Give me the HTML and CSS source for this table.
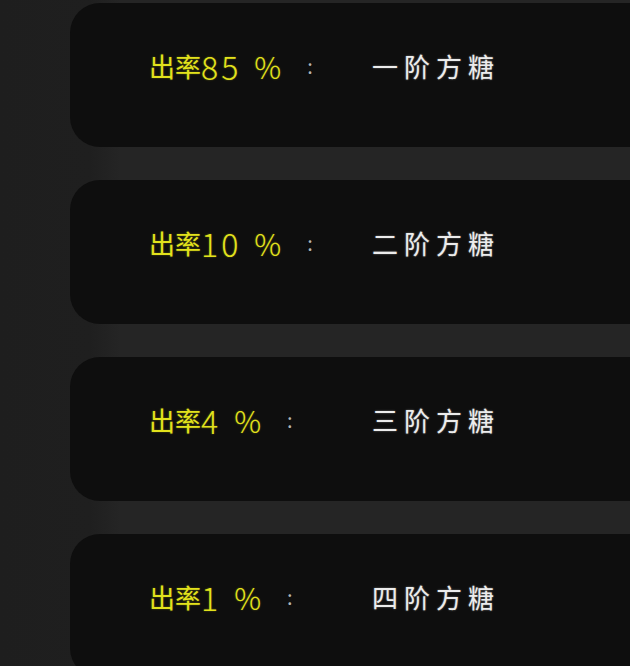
FILE: index.html
```html
<!DOCTYPE html>
<html lang="zh">
<head>
<meta charset="utf-8">
<link rel="stylesheet" href="styles.css">
</head>
<body>
<div class="list">
  <div class="card"><div class="label"><span class="rate">出率<span class="num">85</span><span class="pct">%</span></span><span class="colon">:</span></div><span class="name">一阶方糖</span></div>
  <div class="card"><div class="label"><span class="rate">出率<span class="num">10</span><span class="pct">%</span></span><span class="colon">:</span></div><span class="name">二阶方糖</span></div>
  <div class="card"><div class="label"><span class="rate">出率<span class="num">4</span><span class="pct">%</span></span><span class="colon">:</span></div><span class="name">三阶方糖</span></div>
  <div class="card"><div class="label"><span class="rate">出率<span class="num">1</span><span class="pct">%</span></span><span class="colon">:</span></div><span class="name">四阶方糖</span></div>
</div>
</body>
</html>
```
FILE: styles.css
```css
html, body {
  margin: 0;
  padding: 0;
}
body {
  width: 630px;
  height: 666px;
  overflow: hidden;
  background: linear-gradient(to right, #1e1e1e 0, #1f1f1f 90px, #252525 120px, #252525 100%);
  font-family: "Noto Sans CJK SC", "Noto Sans", sans-serif;
}
.list {
  display: flex;
  flex-direction: column;
  gap: 33px;
  padding-top: 3px;
  margin-left: 70px;
  margin-right: -60px;
}
.card {
  height: 144px;
  box-sizing: border-box;
  background: #0e0e0e;
  border-radius: 30px;
  display: flex;
  align-items: center;
  padding: 0 0 18px 79px;
  font-size: 26px;
  font-weight: 400;
  line-height: 1;
}
.label {
  width: 223px;
  display: flex;
  align-items: center;
}
.rate {
  color: #e2e21c;
  text-shadow: 0 0 2px rgba(226, 226, 28, 0.4);
  display: flex;
  align-items: center;
}
.num {
  font-size: 32px;
  font-weight: 300;
  letter-spacing: 3px;
}
.pct {
  font-size: 30px;
  font-weight: 300;
  margin-left: 13px;
}
.colon {
  color: #b5b5b5;
  font-size: 20px;
  margin-left: 26px;
}
.name {
  color: #ececec;
  letter-spacing: 6px;
  text-shadow: 0 0 2px rgba(255, 255, 255, 0.45);
}
```
